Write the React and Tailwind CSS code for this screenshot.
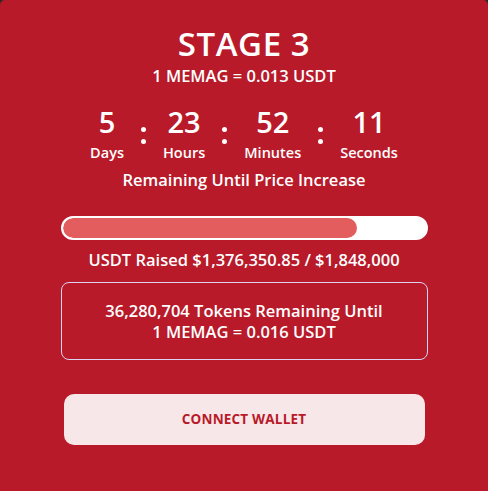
const App = () => {
  const raised = 1376350.85;
  const goal = 1848000;
  const pct = 81; // bar fill as shown

  return (
    <div className="w-[488px] h-[491px] bg-[#2a2a2a] overflow-hidden">
      <div
        className="h-full bg-[#b81a29] rounded-t-[5px] flex flex-col items-center pt-[24px] text-white"
        style={{ fontFamily: '"Open Sans", "Noto Sans", sans-serif' }}
      >
        {/* Stage header */}
        <h1 className="text-[33px] leading-[40px] font-semibold tracking-[0.6px]">STAGE 3</h1>
        <p className="text-[16.5px] leading-[21px] font-semibold mt-[1px]">1 MEMAG = 0.013 USDT</p>

        {/* Countdown */}
        <div className="flex items-start mt-[19px]">
          <Unit value="5" label="Days" />
          <Colon />
          <Unit value="23" label="Hours" />
          <Colon />
          <Unit value="52" label="Minutes" />
          <Colon />
          <Unit value="11" label="Seconds" />
        </div>
        <p className="text-[16.5px] leading-[21px] font-semibold mt-[7px]">Remaining Until Price Increase</p>

        {/* Progress */}
        <div className="w-[367px] h-[24px] mt-[26px] rounded-full bg-white border-2 border-white overflow-hidden">
          <div className="h-full rounded-full bg-[#e35d5f]" style={{ width: `${pct}%` }} />
        </div>
        <p className="text-[16.5px] leading-[21px] font-semibold mt-[9px]">
          USDT Raised ${raised.toLocaleString('en-US')} / ${goal.toLocaleString('en-US')}
        </p>

        {/* Tokens remaining */}
        <div className="w-[367px] h-[78px] mt-[12px] rounded-[8px] border border-[#dcd3f2] flex flex-col items-center justify-center">
          <p className="text-[16.5px] leading-[21px] font-semibold">36,280,704 Tokens Remaining Until</p>
          <p className="text-[16.5px] leading-[21px] font-semibold">1 MEMAG = 0.016 USDT</p>
        </div>

        {/* Connect */}
        <button className="w-[361px] h-[51px] mt-[34px] rounded-[10px] bg-[#f8e7e8] text-[#b81a29] text-[13.5px] font-bold tracking-[0.2px]">
          CONNECT WALLET
        </button>
      </div>
    </div>
  );
};

const Unit = ({ value, label }) => (
  <div className="flex flex-col items-center">
    <span className="text-[29px] leading-[34px] font-semibold">{value}</span>
    <span className="text-[14.5px] leading-[19px] font-semibold mt-[4px]">{label}</span>
  </div>
);

const Colon = () => (
  <div className="flex flex-col items-center gap-[7px] mx-[17px] mt-[22px]">
    <span className="w-[5px] h-[5px] rounded-full bg-white" />
    <span className="w-[5px] h-[5px] rounded-full bg-white" />
  </div>
);

export default App;
